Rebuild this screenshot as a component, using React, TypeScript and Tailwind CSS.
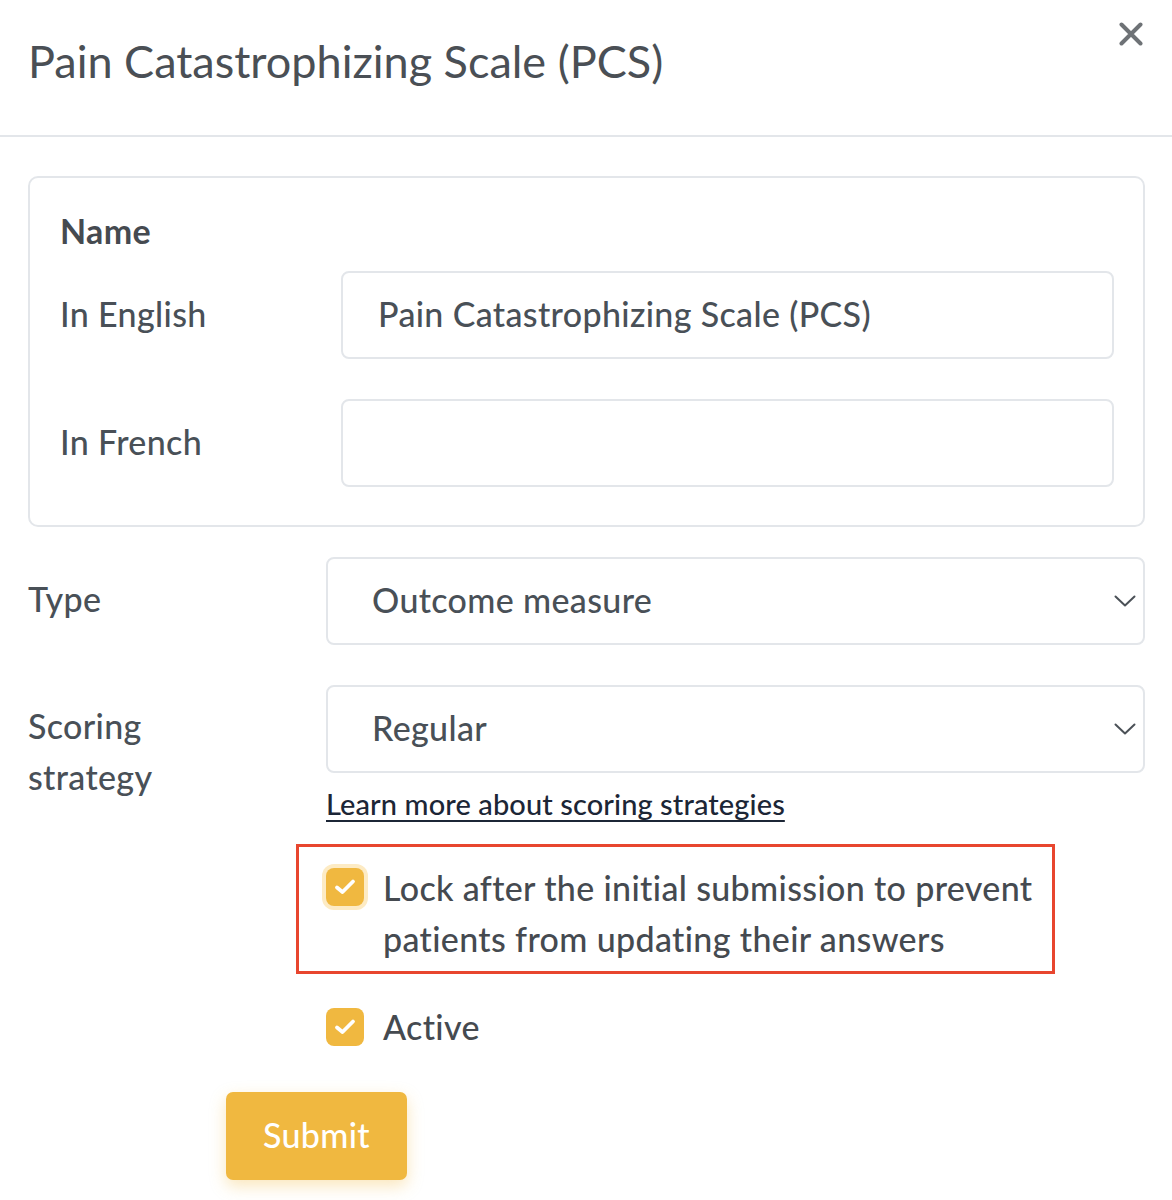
import React from "react";

function Check() {
  return (
    <svg width="22" height="18" viewBox="0 0 22 18" fill="none">
      <path d="M3 9.5 L8.5 14 L19 3.5" stroke="white" strokeWidth="3.8" strokeLinecap="round" strokeLinejoin="round" />
    </svg>
  );
}

function Chevron() {
  return (
    <svg width="22" height="12" viewBox="0 0 22 12" fill="none">
      <path d="M1.5 1.5 L11 10.5 L20.5 1.5" stroke="#4b5157" strokeWidth="2" strokeLinecap="round" strokeLinejoin="round" />
    </svg>
  );
}

export default function App() {
  const font = { fontFamily: "Lato, 'Noto Sans', sans-serif" };
  return (
    <div className="w-[1172px] bg-white text-[#495057]" style={font}>
      <div className="relative flex h-[137px] items-center border-b-2 border-[#e3e6ea] pl-[28px]">
        <h1 className="text-[45px] leading-none text-[#4a4f55] -mt-[12px]">Pain Catastrophizing Scale (PCS)</h1>
        <button className="absolute right-[29px] top-[22px]">
          <svg width="24" height="24" viewBox="0 0 24 24" fill="none">
            <path d="M2.5 2.5 L21.5 21.5 M21.5 2.5 L2.5 21.5" stroke="#6e7276" strokeWidth="4" strokeLinecap="round" />
          </svg>
        </button>
      </div>

      <div className="pl-[28px] pr-[27px] pt-[39px] text-[34px] leading-[51px] font-medium tracking-[0.35px]">
        <div className="rounded-[10px] border-2 border-[#e3e6ea] pl-[30px] pr-[29px] pt-[27px] pb-[38px]">
          <div className="font-bold text-[#454a50]">Name</div>
          <div className="mt-[15px] flex items-center">
            <div className="w-[281px] shrink-0 pb-[3px]">In English</div>
            <div className="flex h-[88px] flex-1 items-center rounded-[8px] border-2 border-[#e3e6ea] pl-[35px] pb-[3px]">
              Pain Catastrophizing Scale (PCS)
            </div>
          </div>
          <div className="mt-[40px] flex items-center">
            <div className="w-[281px] shrink-0 pb-[3px]">In French</div>
            <div className="h-[88px] flex-1 rounded-[8px] border-2 border-[#e3e6ea]"></div>
          </div>
        </div>

        <div className="mt-[30px] flex">
          <div className="w-[298px] shrink-0 pt-[16px]">Type</div>
          <div className="flex h-[88px] flex-1 items-center justify-between rounded-[8px] border-2 border-[#e3e6ea] pl-[44px] pr-[7px]">
            <span className="pb-[3px]">Outcome measure</span>
            <Chevron />
          </div>
        </div>

        <div className="mt-[40px] flex">
          <div className="w-[298px] shrink-0 pt-[15px]">
            Scoring
            <br />
            strategy
          </div>
          <div className="flex-1">
            <div className="flex h-[88px] items-center justify-between rounded-[8px] border-2 border-[#e3e6ea] pl-[44px] pr-[7px]">
              <span className="pb-[3px]">Regular</span>
              <Chevron />
            </div>
            <a href="#" className="mt-[10px] block text-[29px] leading-[42px] tracking-[0.1px] text-[#1c2636] underline decoration-[1.5px] underline-offset-[5px]">
              Learn more about scoring strategies
            </a>

            <div className="-ml-[30px] mt-[19px] w-[759px] border-[3px] border-[#e8462f] pl-[27px] pt-[15px] pb-[7px] pr-[10px]">
              <label className="flex items-start gap-[19px]">
                <span className="mt-[6px] flex h-[38px] w-[38px] shrink-0 items-center justify-center rounded-[8px] bg-[#f0b840] ring-[4px] ring-[#fdebc4]">
                  <Check />
                </span>
                <span className="text-[#454a50]">Lock after the initial submission to prevent patients from updating their answers</span>
              </label>
            </div>

            <label className="mt-[27px] flex items-center gap-[19px]">
              <span className="flex h-[38px] w-[38px] shrink-0 items-center justify-center rounded-[8px] bg-[#f0b840]">
                <Check />
              </span>
              <span className="text-[#454a50]">Active</span>
            </label>
          </div>
        </div>
      </div>

      <div className="pl-[226px] pt-[40px] pb-[20px]">
        <button className="h-[88px] w-[181px] rounded-[7px] bg-[#f0b840] pb-[3px] text-[34px] font-medium tracking-[0.3px] text-white shadow-[0_6px_16px_rgba(240,184,64,0.35)]">
          Submit
        </button>
      </div>
    </div>
  );
}
